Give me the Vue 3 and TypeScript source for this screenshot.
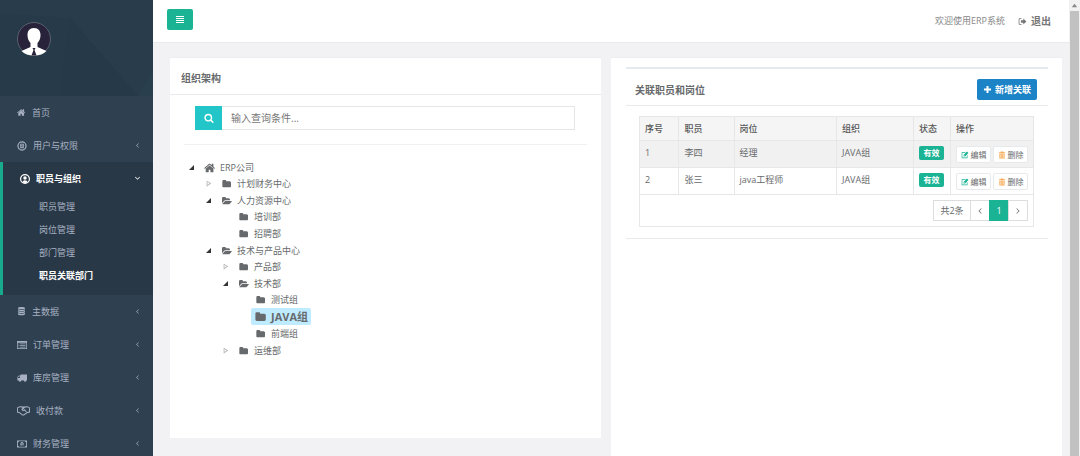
<script setup lang="ts">
import { ref } from 'vue'

interface MenuItem {
  label: string
  icon: string
  size?: 'medium' | 'wide'
  children?: string[]
}

interface TreeRow {
  label: string
  state: 'open' | 'closed' | 'leaf'
  children?: TreeRow[]
}

interface Relation {
  id: number
  name: string
  post: string
  group: string
}

const icons: Record<string, string> = {
  home: 'M1408 992v480q0 26-19 45t-45 19h-384v-384h-256v384h-384q-26 0-45-19t-19-45v-480q0-1 .5-3t.5-3l575-474 575 474q1 2 1 6zm223-69l-62 74q-8 9-21 11h-3q-13 0-21-7l-692-577-692 577q-12 8-24 7-13-2-21-11l-62-74q-8-10-7-23.5t11-21.5l719-599q32-26 76-26t76 26l244 204v-195q0-14 9-23t23-9h192q14 0 23 9t9 23v408l219 182q10 8 11 21.5t-7 23.5z',
  search: 'M1216 832q0-185-131.5-316.5t-316.5-131.5-316.5 131.5-131.5 316.5 131.5 316.5 316.5 131.5 316.5-131.5 131.5-316.5zm512 832q0 52-38 90t-90 38q-54 0-90-38l-343-342q-179 124-399 124-143 0-273.5-55.5t-225-150-150-225-55.5-273.5 55.5-273.5 150-225 225-150 273.5-55.5 273.5 55.5 225 150 150 225 55.5 273.5q0 220-124 399l343 343q37 37 37 90z',
  folder: 'M1728 608v704q0 92-66 158t-158 66h-1216q-92 0-158-66t-66-158v-960q0-92 66-158t158-66h320q92 0 158 66t66 158v32h672q92 0 158 66t66 158z',
  folderOpen: 'M1879 952q0 31-31 66l-336 396q-43 51-120.5 86.5t-143.5 35.5h-1088q-34 0-60.5-13t-26.5-43q0-31 31-66l336-396q43-51 120.5-86.5t143.5-35.5h1088q34 0 60.5 13t26.5 43zm-343-344v160h-832q-94 0-197 47.5t-164 119.5l-337 396-5 6q0-4-.5-12.5t-.5-12.5v-960q0-92 66-158t158-66h320q92 0 158 66t66 158v32h544q92 0 158 66t66 158z',
  life: 'M896 64a832 832 0 1 0 0 1664a832 832 0 1 0 0-1664zm0 220a612 612 0 0 1 612 612a612 612 0 0 1-1224 0a612 612 0 0 1 612-612zm-320 230v780h640v-780zm190 120h260v160h-260zm0 320h260v160h-260z',
  user: 'M896 0a896 896 0 1 0 0 1792a896 896 0 1 0 0-1792zm0 216a680 680 0 1 1 0 1360a680 680 0 1 1 0-1360zm0 190a310 310 0 1 0 0 620a310 310 0 1 0 0-620zm-446 984q60-280 446-280t446 280a665 665 0 0 1-892 0z',
  database: 'M896 0q-700 0-700 230t700 230 700-230-700-230zm-700 430v190q0 210 700 210t700-210v-190q-180 150-700 150t-700-150zm0 380v190q0 210 700 210t700-210v-190q-180 150-700 150t-700-150zm0 380v200q0 260 700 260t700-260v-200q-180 150-700 150t-700-150z',
  list: 'M0 160h1792v1440h-1792zm130 340v970h1532v-970zm130 130h160v140h-160zm290 0h980v140h-980zm-290 280h160v140h-160zm290 0h980v140h-980zm-290 280h160v140h-160zm290 0h980v140h-980z',
  truck: 'M1792 256v1100h-130a210 210 0 0 1-420 0h-500a210 210 0 0 1-420 0h-256v-620l290-310h290v-170zm-1650 540v110h370v-310h-130z',
  handshake: 'M0 470l380-170 520 60 520-60 372 170v700l-400 90-440 320h-220l-380-300-352-100zm130 90v520l260 60 390 310h120l440-330 320-70v-490l-260-110-340 60-250 280q-120 90-230-30l190-260-360-40zm700 330l190-200 330 360-90 100-260-250-150 100-210-60 130-110z',
  money: 'M0 256h1792v1280h-1792zm150 320v640a190 190 0 0 1 190 170h1112a190 190 0 0 1 190-170v-640a190 190 0 0 1-190-170h-1112a190 190 0 0 1-190 170zm746-60c400 0 400 760 0 760s-400-760 0-760zm-120 240v110h70v230h-90v100h290v-100h-80v-340z',
  plus: 'M700 192h392v508h508v392h-508v508h-392v-508h-508v-392h508z',
  signout: 'M704 256v150h-300q-120 0-120 120v740q0 120 120 120h300v150h-340q-236 0-236-236v-808q0-236 236-236zm350 20l620 620-620 620v-350h-470v-540h470z',
  edit: 'M150 300h900l-150 150h-600v1000h1000v-430l150-150v730h-1300zm1180-180l340 340-750 750h-340v-340zm-590 790v130h130v-130z',
  trash: 'M600 128h592v170h400v170h-1392v-170h400zm-300 410h1192v1150h-1192zm230 170v800h110v-800zm310 0v800h110v-800zm310 0v800h110v-800z',
  left: 'M1150 300l110 110-486 486 486 486-110 110-600-596z',
  right: 'M640 300l-110 110 486 486-486 486 110 110 600-596z',
  down: 'M250 600l140-140 506 506 506-506 140 140-646 646z',
}

const menu: MenuItem[] = [
  { label: '首页', icon: 'home' },
  { label: '用户与权限', icon: 'life', size: 'medium', children: [] },
  { label: '职员与组织', icon: 'user', size: 'medium', children: ['职员管理', '岗位管理', '部门管理', '职员关联部门'] },
  { label: '主数据', icon: 'database', children: [] },
  { label: '订单管理', icon: 'list', size: 'medium', children: [] },
  { label: '库房管理', icon: 'truck', size: 'medium', children: [] },
  { label: '收付款', icon: 'handshake', size: 'wide', children: [] },
  { label: '财务管理', icon: 'money', size: 'medium', children: [] },
]

const tree: TreeRow[] = [
  { label: '计划财务中心', state: 'closed' },
  {
    label: '人力资源中心',
    state: 'open',
    children: [
      { label: '培训部', state: 'leaf' },
      { label: '招聘部', state: 'leaf' },
    ],
  },
  {
    label: '技术与产品中心',
    state: 'open',
    children: [
      { label: '产品部', state: 'closed' },
      {
        label: '技术部',
        state: 'open',
        children: [
          { label: '测试组', state: 'leaf' },
          { label: 'JAVA组', state: 'leaf' },
          { label: '前端组', state: 'leaf' },
        ],
      },
      { label: '运维部', state: 'closed' },
    ],
  },
]

const relations: Relation[] = [
  { id: 1, name: '李四', post: '经理', group: 'JAVA组' },
  { id: 2, name: '张三', post: 'java工程师', group: 'JAVA组' },
]

const activeMenu = ref('职员与组织')
const activePage = ref('职员关联部门')
const selected = ref('JAVA组')
const query = ref('')
</script>

<template>
  <div class="layout">
    <aside class="sidebar">
      <div class="profile">
        <svg class="facets" viewBox="0 0 153 96" preserveAspectRatio="none" aria-hidden="true">
          <path d="M0 0h90l-20 18L0 14z" fill="#283c4b" />
          <path d="M90 0h63v96h-15L70 18z" fill="#283c4b" />
          <path d="M70 18l68 78H60z" fill="#253948" />
          <path d="M153 70v26h-15z" fill="#2a3f4e" />
        </svg>
        <svg class="avatar" viewBox="0 0 34 34" role="img" aria-label="头像">
          <circle cx="17" cy="17" r="16.5" fill="#28233a" stroke="#59616c" />
          <path d="M17 6c-4.500 0-6.500 3-6.500 7 0 3 1 6 3 8v4l-9 4c3 3 7 4.500 12.500 4.500s9.500-1.500 12.500-4.500l-9-4v-4c2-2 3-5 3-8 0-4-2-7-6.500-7z" fill="#fff" />
          <path d="M15.500 26h3l-1 2 2 5.500h-5l2-5.500z" fill="#28233a" />
        </svg>
      </div>
      <nav>
        <ul class="menu">
          <li v-for="item in menu" :key="item.label" :class="{ active: item.label === activeMenu }">
            <a href="#" class="menu-link" @click.prevent="activeMenu = item.label">
              <svg class="icon" :class="item.size" viewBox="0 0 1792 1792"><path :d="icons[item.icon]" fill-rule="evenodd" /></svg>
              <span>{{ item.label }}</span>
              <svg v-if="item.children" class="chevron" viewBox="0 0 1792 1792"><path :d="item.label === activeMenu ? icons.down : icons.left" /></svg>
            </a>
            <ul v-if="item.label === activeMenu && item.children?.length" class="submenu">
              <li v-for="sub in item.children" :key="sub">
                <a href="#" :class="{ current: sub === activePage }" @click.prevent="activePage = sub">{{ sub }}</a>
              </li>
            </ul>
          </li>
        </ul>
      </nav>
    </aside>

    <div class="main">
      <header class="topbar">
        <button class="toggle" type="button" aria-label="菜单">
          <svg viewBox="0 0 8 7"><path d="M0 0h8v1H0zM0 2h8v1H0zM0 4h8v1H0zM0 6h8v1H0z" /></svg>
        </button>
        <span class="welcome">欢迎使用ERP系统</span>
        <a href="#" class="logout">
          <svg class="icon" viewBox="0 0 1792 1792"><path :d="icons.signout" /></svg>退出
        </a>
      </header>

      <main class="content">
        <section class="panel org">
          <h2>组织架构</h2>
          <div class="org-body">
            <form class="search" @submit.prevent>
              <button type="submit" aria-label="查询">
                <svg class="icon" viewBox="0 0 1792 1792"><path :d="icons.search" /></svg>
              </button>
              <input v-model="query" type="text" placeholder="输入查询条件..." aria-label="输入查询条件" />
            </form>
            <div class="tree">
              <div class="node">
                <i class="arrow open"></i>
                <svg class="icon root" viewBox="0 0 1792 1792"><path :d="icons.home" /></svg>
                <span>ERP公司</span>
              </div>
              <ul>
                <li v-for="a in tree" :key="a.label">
                  <div class="node">
                    <i class="arrow" :class="a.state"></i>
                    <svg class="icon" viewBox="0 0 1920 1792"><path :d="a.state === 'open' ? icons.folderOpen : icons.folder" /></svg>
                    <span>{{ a.label }}</span>
                  </div>
                  <ul v-if="a.children">
                    <li v-for="b in a.children" :key="b.label">
                      <div class="node">
                        <i class="arrow" :class="b.state"></i>
                        <svg class="icon" viewBox="0 0 1920 1792"><path :d="b.state === 'open' ? icons.folderOpen : icons.folder" /></svg>
                        <span>{{ b.label }}</span>
                      </div>
                      <ul v-if="b.children">
                        <li v-for="c in b.children" :key="c.label">
                          <div class="node" @click="selected = c.label">
                            <i class="arrow leaf"></i>
                            <div class="pick" :class="{ selected: c.label === selected }">
                              <svg class="icon" viewBox="0 0 1920 1792"><path :d="icons.folder" /></svg>
                              <span>{{ c.label }}</span>
                            </div>
                          </div>
                        </li>
                      </ul>
                    </li>
                  </ul>
                </li>
              </ul>
            </div>
          </div>
        </section>

        <section class="panel relation">
          <div class="box">
            <div class="box-head">
              <h2>关联职员和岗位</h2>
              <button class="add" type="button">
                <svg class="icon" viewBox="0 0 1792 1792"><path :d="icons.plus" /></svg>新增关联
              </button>
            </div>
            <div class="box-body">
              <table>
                <colgroup>
                  <col class="c-id" /><col class="c-name" /><col class="c-post" /><col /><col class="c-state" /><col class="c-ops" />
                </colgroup>
                <thead>
                  <tr><th>序号</th><th>职员</th><th>岗位</th><th>组织</th><th>状态</th><th>操作</th></tr>
                </thead>
                <tbody>
                  <tr v-for="r in relations" :key="r.id">
                    <td>{{ r.id }}</td>
                    <td>{{ r.name }}</td>
                    <td>{{ r.post }}</td>
                    <td>{{ r.group }}</td>
                    <td><span class="badge">有效</span></td>
                    <td>
                      <div class="ops">
                        <button type="button"><svg class="icon edit" viewBox="0 0 1792 1792"><path :d="icons.edit" fill-rule="evenodd" /></svg>编辑</button>
                        <button type="button"><svg class="icon trash" viewBox="0 0 1792 1792"><path :d="icons.trash" fill-rule="evenodd" /></svg>删除</button>
                      </div>
                    </td>
                  </tr>
                </tbody>
                <tfoot>
                  <tr>
                    <td colspan="6">
                      <div class="pager">
                        <span>共2条</span>
                        <button type="button" aria-label="上一页"><svg class="icon" viewBox="0 0 1792 1792"><path :d="icons.left" /></svg></button>
                        <button type="button" class="on">1</button>
                        <button type="button" aria-label="下一页"><svg class="icon" viewBox="0 0 1792 1792"><path :d="icons.right" /></svg></button>
                      </div>
                    </td>
                  </tr>
                </tfoot>
              </table>
            </div>
          </div>
        </section>
      </main>
    </div>

    <div class="scrollbar" aria-hidden="true">
      <svg viewBox="0 0 10 10"><path d="M5 3l3 4H2z" /></svg>
      <div class="thumb"></div>
    </div>
  </div>
</template>

<style>
body {
  margin: 0;
  background: #f2f2f4;
}
</style>

<style scoped>
.layout {
  display: flex;
  min-height: 100vh;
  font-family: "Open Sans", "Noto Sans CJK SC", sans-serif;
  font-size: 9px;
  line-height: 14px;
  color: #676a6c;
}
.layout * {
  box-sizing: border-box;
}
ul {
  list-style: none;
  margin: 0;
  padding: 0;
}
a {
  color: inherit;
  text-decoration: none;
}
button,
input {
  font: inherit;
  color: inherit;
  margin: 0;
  padding: 0;
  border: 0;
}
button {
  cursor: pointer;
}
h2 {
  margin: 0;
  font-size: 10px;
  font-weight: 700;
}
.icon {
  width: 9px;
  height: 9px;
  flex: none;
  fill: currentColor;
}

.sidebar {
  width: 153px;
  flex: none;
  background: #2f4050;
  color: #a7b1c2;
}
.profile {
  position: relative;
  height: 96px;
  padding: 22px 17px;
  background: #263a49;
}
.facets {
  position: absolute;
  inset: 0;
  width: 100%;
  height: 100%;
}
.avatar {
  position: relative;
  display: block;
  width: 34px;
  height: 34px;
}
.menu-link {
  display: flex;
  align-items: center;
  gap: 6px;
  height: 33px;
  padding: 0 12px 0 17px;
}
.menu-link .medium {
  width: 10px;
  height: 10px;
}
.menu-link .wide {
  width: 13px;
  height: 13px;
}
.chevron {
  width: 7px;
  height: 7px;
  margin-left: auto;
  fill: currentColor;
}
.active {
  border-left: 3px solid #19aa8d;
  background: #293846;
}
.active > .menu-link {
  color: #fff;
  font-weight: 700;
}
.submenu {
  padding-bottom: 8px;
}
.submenu a {
  display: block;
  padding-left: 36px;
  line-height: 23px;
}
.submenu .current {
  color: #fff;
  font-weight: 700;
}

.main {
  flex: 1;
  min-width: 0;
  display: flex;
  flex-direction: column;
}
.topbar {
  display: flex;
  align-items: center;
  height: 43px;
  padding: 0 18px 3px 14px;
  background: #fff;
  border-bottom: 1px solid #e7eaec;
}
.toggle {
  display: flex;
  align-items: center;
  justify-content: center;
  width: 26px;
  height: 21px;
  border-radius: 2px;
  background: #1ab394;
  color: #fff;
}
.toggle svg {
  width: 8px;
  height: 7px;
  fill: currentColor;
}
.welcome {
  margin-left: auto;
  padding-top: 3px;
  color: #888;
}
.logout {
  display: flex;
  align-items: center;
  gap: 4px;
  margin-left: 13px;
  padding-top: 3px;
  font-size: 10px;
  font-weight: 700;
  color: #777;
}

.content {
  flex: 1;
  display: grid;
  grid-template-columns: 431fr 451fr;
  gap: 10px;
  padding: 14px 7px 0 17px;
}
.panel {
  background: #fff;
  border-top: 1px solid #eceef0;
}
.org {
  margin-bottom: 22px;
}
.org h2 {
  padding: 13px 11px 9px;
  border-bottom: 1px solid #e7eaec;
}
.org-body {
  padding: 11px 14px 0;
}
.search {
  display: flex;
  height: 39px;
  padding: 0 12px 14px 11px;
  border-bottom: 1px solid #f0f1f2;
}
.search button {
  display: flex;
  align-items: center;
  justify-content: center;
  width: 27px;
  background: #23c6c8;
  color: #fff;
}
.search .icon {
  width: 10px;
  height: 10px;
}
.search input {
  flex: 1;
  min-width: 0;
  padding: 0 9px;
  border: 1px solid #e5e6e7;
  border-left: 0;
  font-size: 10px;
  background: #fff;
}
.search input::placeholder {
  color: #777;
  opacity: 1;
}
.tree {
  padding-top: 14px;
}
.tree ul {
  margin-top: -1px;
  padding-left: 17px;
}
.node {
  display: flex;
  align-items: center;
  height: 17px;
}
.node .icon {
  width: 10px;
  height: 10px;
  margin-right: 5px;
}
.node .root {
  width: 12px;
  height: 12px;
  margin-right: 4px;
  margin-left: -1px;
}
.arrow {
  width: 6px;
  height: 6px;
  margin: 0 10px 0 5px;
  flex: none;
}
.arrow.open {
  width: 5px;
  height: 5px;
  margin-right: 11px;
  background: #333;
  clip-path: polygon(100% 0, 100% 100%, 0 100%);
}
.arrow.closed {
  background: #bbb;
  clip-path: polygon(10% 0, 90% 50%, 10% 100%, 10% 80%, 60% 50%, 25% 25%, 25% 100%, 10% 100%);
}
.pick {
  display: flex;
  align-items: center;
  height: 17px;
}
.pick.selected {
  margin-left: -5px;
  padding: 0 3px 0 4px;
  border-radius: 2px;
  background: #beebff;
  font-size: 11px;
  font-weight: 700;
}
.pick.selected .icon {
  width: 12px;
  height: 12px;
  margin-right: 4px;
}

.relation {
  padding: 9px 14px 0 15px;
}
.box {
  border-top: 2px solid #e7eaec;
  border-bottom: 1px solid #e7eaec;
}
.box-head {
  display: flex;
  align-items: center;
  justify-content: space-between;
  height: 37px;
  padding: 5px 11px 0 9px;
  border-bottom: 1px solid #e7eaec;
}
.add {
  display: flex;
  align-items: center;
  gap: 3px;
  height: 21px;
  padding: 0 6px;
  border-radius: 2px;
  background: #1c84c6;
  color: #fff;
  font-weight: 700;
}
.box-body {
  padding: 10px 14px 11px 13px;
}
table {
  width: 100%;
  table-layout: fixed;
  border-collapse: collapse;
}
.c-id { width: 10%; }
.c-name { width: 14%; }
.c-post { width: 26%; }
.c-state { width: 37px; }
.c-ops { width: 83px; }
th,
td {
  border: 1px solid #e7e7e7;
  padding: 0 5px;
  text-align: left;
  vertical-align: top;
}
th {
  height: 24px;
  line-height: 23px;
  background: #f5f5f6;
  font-weight: 500;
  color: #555;
}
tbody td {
  height: 27px;
  padding-top: 5px;
}
tbody tr:first-child td {
  background: #f1f1f1;
}
.badge {
  display: block;
  width: 25px;
  border-radius: 2px;
  background: #1ab394;
  color: #fff;
  font-size: 8px;
  font-weight: 700;
  text-align: center;
}
.ops {
  display: flex;
  gap: 2px;
}
.ops button {
  display: flex;
  align-items: center;
  justify-content: center;
  gap: 2px;
  width: 35px;
  height: 17px;
  border: 1px solid #e7eaec;
  border-radius: 2px;
  background: #fff;
  font-size: 8px;
}
.ops .icon {
  width: 8px;
  height: 8px;
}
.edit {
  color: #1ab394;
}
.trash {
  color: #f8ac59;
}
tfoot td {
  height: 31px;
  padding: 5px;
}
.pager {
  display: flex;
  justify-content: flex-end;
}
.pager > * {
  display: flex;
  align-items: center;
  justify-content: center;
  width: 20px;
  height: 21px;
  margin-left: -1px;
  border: 1px solid #ddd;
  background: #fff;
}
.pager > span {
  width: 38px;
}
.pager .on {
  border-color: #1ab394;
  background: #1ab394;
  color: #fff;
}
.pager .icon {
  width: 8px;
  height: 8px;
}

.scrollbar {
  display: flex;
  flex-direction: column;
  width: 11px;
  flex: none;
  padding: 0 1px;
  background: #f1f1f1;
}
.scrollbar svg {
  height: 11px;
  fill: #888;
}
.thumb {
  flex: 1;
  background: #c1c1c1;
}
</style>
